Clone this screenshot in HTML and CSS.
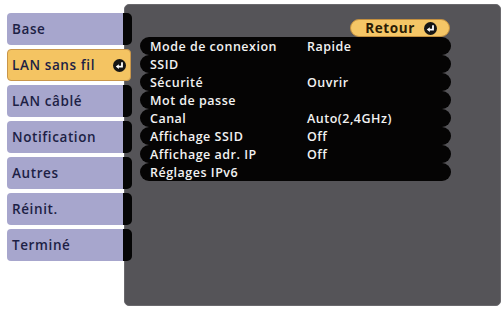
FILE: index.html
```html
<!DOCTYPE html>
<html lang="fr">
<head>
<meta charset="utf-8">
<link rel="stylesheet" href="styles.css">
</head>
<body>
<div class="screen">
  <nav class="menu">
    <div class="item"><div class="btn">Base</div><div class="tab"></div></div>
    <div class="item active"><div class="btn">LAN sans fil
      <svg class="enter" viewBox="0 0 13 13" width="13" height="13"><circle cx="6.5" cy="6.5" r="6.5" fill="#151515"/><path d="M9 3.2V7.6H5.2" fill="none" stroke="#fff" stroke-width="1.8"/><polygon points="2.8,7.6 5.8,5.2 5.8,10" fill="#fff"/></svg>
    </div></div>
    <div class="item"><div class="btn">LAN câblé</div><div class="tab"></div></div>
    <div class="item"><div class="btn">Notification</div><div class="tab"></div></div>
    <div class="item"><div class="btn">Autres</div><div class="tab"></div></div>
    <div class="item"><div class="btn">Réinit.</div><div class="tab"></div></div>
    <div class="item"><div class="btn">Terminé</div><div class="tab"></div></div>
  </nav>
  <main class="panel">
    <div class="back-row">
      <div class="back">Retour
        <svg class="enter" viewBox="0 0 13 13" width="13" height="13"><circle cx="6.5" cy="6.5" r="6.5" fill="#151515"/><path d="M9 3.2V7.6H5.2" fill="none" stroke="#fff" stroke-width="1.8"/><polygon points="2.8,7.6 5.8,5.2 5.8,10" fill="#fff"/></svg>
      </div>
    </div>
    <ul class="rows">
      <li class="row"><span class="label">Mode de connexion</span><span class="value">Rapide</span></li>
      <li class="row"><span class="label">SSID</span><span class="value"></span></li>
      <li class="row"><span class="label">Sécurité</span><span class="value">Ouvrir</span></li>
      <li class="row"><span class="label">Mot de passe</span><span class="value"></span></li>
      <li class="row"><span class="label">Canal</span><span class="value">Auto(2,4GHz)</span></li>
      <li class="row"><span class="label">Affichage SSID</span><span class="value">Off</span></li>
      <li class="row"><span class="label">Affichage adr. IP</span><span class="value">Off</span></li>
      <li class="row"><span class="label">Réglages IPv6</span><span class="value"></span></li>
    </ul>
  </main>
</div>
</body>
</html>
```

FILE: styles.css
```css
* { box-sizing: border-box; }
html, body { margin: 0; padding: 0; background: #ffffff; }
body { width: 503px; height: 309px; overflow: hidden; font-family: "Open Sans", "DejaVu Sans", sans-serif; }

.screen { display: flex; align-items: flex-start; padding-left: 7px; }

.menu { display: flex; flex-direction: column; gap: 4px; margin-top: 13px; width: 125px; position: relative; z-index: 1; }
.item { display: flex; height: 32px; }
.btn {
  width: 116px; height: 32px; background: #a7a6cd; border-radius: 4px 0 0 4px;
  color: #1d1f45; font-weight: 600; font-size: 13.5px; letter-spacing: 0.6px;
  display: flex; align-items: center; padding-left: 5px;
}
.tab { width: 9px; height: 32px; background: #050505; border-radius: 0 5px 5px 0; }
.item.active .btn {
  width: 124px; background: #f4c462; border: 1px solid #c9964a; border-radius: 4px;
  padding-left: 4px; justify-content: space-between; padding-right: 4px;
}
.enter { display: block; }

.panel {
  margin-left: -8px; margin-top: 4px; width: 377px; height: 302px;
  background: #555458; border-radius: 5px; border: 1px solid #6a696d;
  padding: 14px 49px 0 15px;
}
.back-row { display: flex; justify-content: flex-end; padding-right: 1px; }
.back {
  width: 100px; height: 18px; background: #f5c666; border: 1px solid #c38f3f; border-radius: 9px;
  display: flex; align-items: center; justify-content: flex-end; gap: 9px; padding-right: 12px;
  color: #2a1c05; font-weight: 700; font-size: 13.5px; letter-spacing: 0.6px;
}
.rows { list-style: none; margin: 0; padding: 0; }
.row {
  display: flex; height: 18px; align-items: center; background: #050404; border-radius: 9px;
  color: #f2f2f2; font-weight: 600; font-size: 12.5px; letter-spacing: 0.5px; padding-left: 10px;
}
.label { width: 157px; }
.value { flex: 1; }
```
